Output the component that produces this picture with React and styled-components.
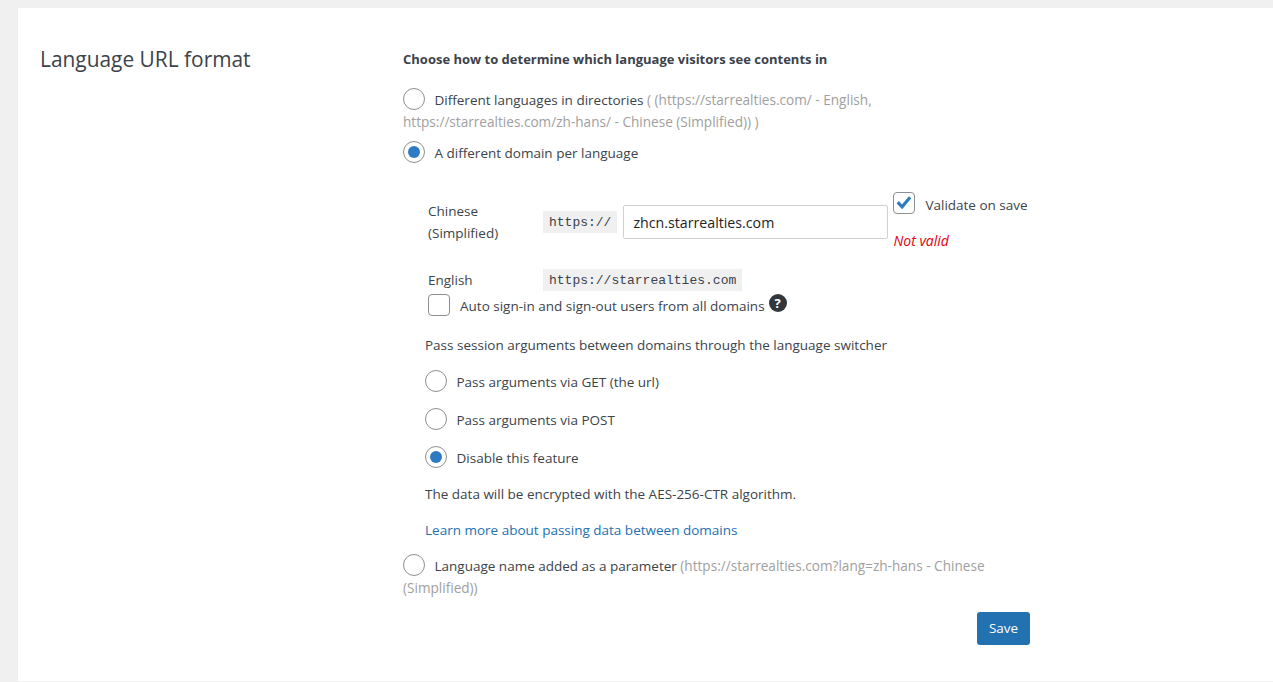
import React from 'react';
import styled, { createGlobalStyle } from 'styled-components';

const GlobalStyle = createGlobalStyle`
  html, body {
    margin: 0;
    padding: 0;
    background: #f0f0f1;
    color: #3c434a;
    font-family: "Open Sans", "Noto Sans", sans-serif;
    font-size: 13.5px;
    line-height: 22px;
  }
`;

const Page = styled.div`
  padding: 8px 0 0 18px;
  height: 682px;
  box-sizing: border-box;
  overflow: hidden;
`;

const Card = styled.section`
  display: flex;
  height: 673px;
  background: #fff;
  padding: 35px 0 0 22px;
  box-sizing: border-box;
`;

const Title = styled.h2`
  width: 363px;
  flex: none;
  margin: 0;
  font-size: 20.9px;
  line-height: 32px;
  font-weight: 400;
  color: #3c434a;
`;

const Settings = styled.div`
  width: 627px;
  display: flex;
  flex-direction: column;
`;

const Lead = styled.p`
  margin: 5px 0 19px;
  font-weight: 700;
  font-size: 13px;
  color: #3c434a;
`;

const Choice = styled.label`
  display: block;
  margin-bottom: ${p => p.$gap || 0}px;
`;

const Radio = styled.span`
  display: inline-block;
  box-sizing: border-box;
  width: 22px;
  height: 22px;
  border-radius: 50%;
  border: 1px solid #8c8f94;
  background: #fff;
  vertical-align: middle;
  margin: -4px 9.5px 0 0;
  position: relative;
  &::after {
    content: '';
    display: ${p => (p.$on ? 'block' : 'none')};
    position: absolute;
    inset: 4px;
    border-radius: 50%;
    background: #2e7bc4;
  }
`;

const Hint = styled.span`
  color: #a0a0a0;
  font-size: 13.6px;
`;

const Domains = styled.div`
  margin: 28px 0 0 25px;
  display: flex;
  flex-direction: column;
`;

const DomainRow = styled.div`
  display: grid;
  grid-template-columns: 115px auto 1fr;
  align-items: center;
  margin-bottom: ${p => p.$gap || 0}px;
`;

const DomainLabel = styled.div`
  width: 90px;
`;

const Code = styled.code`
  justify-self: start;
  background: #f0f0f1;
  color: #3c434a;
  font-family: "Liberation Mono", monospace;
  font-size: 13px;
  line-height: 20px;
  padding: 2px 6px 0;
`;

const DomainInput = styled.input`
  width: 265px;
  height: 34px;
  box-sizing: border-box;
  margin: 0 5px 0 6px;
  padding: 0 9px;
  border: 1px solid #d0d0d0;
  border-radius: 2px;
  color: #1d2327;
  font-family: inherit;
  font-size: 14.2px;
  outline: none;
`;

const InputCell = styled.div`
  display: flex;
  align-items: center;
`;

const Validation = styled.div`
  display: flex;
  flex-direction: column;
`;

const CheckLine = styled.label`
  display: flex;
  align-items: center;
  gap: 10px;
`;

const CheckBox = styled.span`
  flex: none;
  width: 22px;
  height: 22px;
  box-sizing: border-box;
  border: 1px solid #8c8f94;
  border-radius: 4px;
  background: #fff;
  display: flex;
  align-items: center;
  justify-content: center;
`;

const CheckText = styled.span`
  line-height: 18px;
  padding-top: ${p => p.$drop}px;
`;

const Error = styled.em`
  margin-top: 16px;
  font-size: 14px;
  color: #e2000f;
`;

const HelpIcon = styled.span`
  width: 18px;
  height: 18px;
  margin: -4px 0 0 -6px;
  border-radius: 50%;
  background: #32373c;
  color: #fff;
  font-size: 13px;
  font-weight: 700;
  line-height: 18px;
  text-align: center;
`;

const Arguments = styled.div`
  margin: 18px 0 0 22px;
  display: flex;
  flex-direction: column;
`;

const ArgNote = styled.p`
  margin: 0 0 ${p => p.$gap || 0}px;
`;

const ArgChoice = styled.label`
  display: block;
  margin-bottom: 16px;
  &:nth-of-type(3) {
    margin-bottom: 14px;
  }
`;

const MoreLink = styled.a`
  color: #2271b1;
  text-decoration: none;
`;

const Footer = styled.div`
  display: flex;
  justify-content: flex-end;
  margin-top: 13px;
`;

const SaveButton = styled.button`
  width: 53px;
  height: 33px;
  border: 0;
  border-radius: 3px;
  background: #2271b1;
  color: #fff;
  font-family: inherit;
  font-size: 13.5px;
  padding: 0 0 2px;
`;

const Tick = () => (
  <svg width="20" height="20" viewBox="0 0 20 20" aria-hidden="true">
    <path d="M2.6 10.4l2.2-2.3 3.2 3.3 6.9-8.2 2.4 2.1-9.1 11z" fill="#2e7bc4" />
  </svg>
);

const App = () => (
  <>
    <GlobalStyle />
    <Page>
      <Card>
        <Title>Language URL format</Title>
        <Settings>
          <Lead>Choose how to determine which language visitors see contents in</Lead>
          <Choice $gap={9}>
            <Radio />
            Different languages in directories{' '}
            <Hint>( (https://starrealties.com/ - English,</Hint>
            <br />
            <Hint>https://starrealties.com/zh-hans/ - Chinese (Simplified)) )</Hint>
          </Choice>
          <Choice>
            <Radio $on />
            A different domain per language
          </Choice>

          <Domains>
            <DomainRow $gap={17}>
              <DomainLabel>Chinese (Simplified)</DomainLabel>
              <Code>https://</Code>
              <InputCell>
                <DomainInput defaultValue="zhcn.starrealties.com" />
                <Validation>
                  <CheckLine>
                    <CheckBox><Tick /></CheckBox>
                    <CheckText $drop={4}>Validate on save</CheckText>
                  </CheckLine>
                  <Error>Not valid</Error>
                </Validation>
              </InputCell>
            </DomainRow>
            <DomainRow $gap={3}>
              <DomainLabel>English</DomainLabel>
              <Code>https://starrealties.com</Code>
            </DomainRow>
            <CheckLine>
              <CheckBox />
              <CheckText $drop={2}>Auto sign-in and sign-out users from all domains</CheckText>
              <HelpIcon>?</HelpIcon>
            </CheckLine>
          </Domains>

          <Arguments>
            <ArgNote $gap={15}>Pass session arguments between domains through the language switcher</ArgNote>
            <ArgChoice><Radio />Pass arguments via GET (the url)</ArgChoice>
            <ArgChoice><Radio />Pass arguments via POST</ArgChoice>
            <ArgChoice><Radio $on />Disable this feature</ArgChoice>
            <ArgNote $gap={14}>The data will be encrypted with the AES-256-CTR algorithm.</ArgNote>
            <ArgNote $gap={14}><MoreLink href="#">Learn more about passing data between domains</MoreLink></ArgNote>
          </Arguments>

          <Choice>
            <Radio />
            Language name added as a parameter{' '}
            <Hint>(https://starrealties.com?lang=zh-hans - Chinese</Hint>
            <br />
            <Hint>(Simplified))</Hint>
          </Choice>
          <Footer>
            <SaveButton type="button">Save</SaveButton>
          </Footer>
        </Settings>
      </Card>
    </Page>
  </>
);

export default App;
